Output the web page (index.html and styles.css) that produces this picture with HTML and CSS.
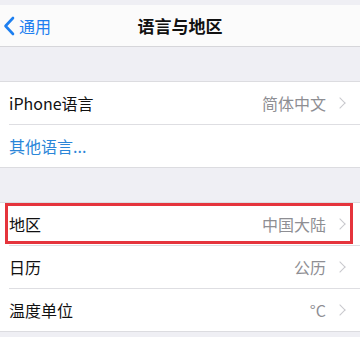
FILE: index.html
```html
<!DOCTYPE html>
<html lang="zh">

<head>
    <meta charset="UTF-8">
    <title>语言与地区</title>
    <link rel="stylesheet" href="styles.css">
</head>

<body>

    <header class="navbar">
        <a class="back">
            <svg width="12" height="20" viewBox="0 0 12 20">
                <path d="M10 2 L2.5 10 L10 18" fill="none" stroke="#1d7ff0" stroke-width="2.6" stroke-linecap="round" stroke-linejoin="round"/>
            </svg>
            <span>通用</span>
        </a>
        <h1>语言与地区</h1>
    </header>

    <section class="group first">
        <div class="row">
            <span class="label">iPhone语言</span>
            <span class="value">简体中文</span>
            <span class="chev"></span>
        </div>
        <div class="row">
            <span class="label link">其他语言...</span>
        </div>
    </section>

    <section class="group second">
        <div class="row highlight">
            <span class="label">地区</span>
            <span class="value">中国大陆</span>
            <span class="chev"></span>
        </div>
        <div class="row">
            <span class="label">日历</span>
            <span class="value">公历</span>
            <span class="chev"></span>
        </div>
        <div class="row">
            <span class="label">温度单位</span>
            <span class="value">°C</span>
            <span class="chev"></span>
        </div>
    </section>

</body></html>
```

FILE: styles.css
```css
body {
    margin: 0;
    background-color: #efeff4;
    font-family: "Noto Sans CJK SC", "Noto Sans", sans-serif;
    color: #111;
    padding-top: 5px;
    height: 332px;
    overflow: hidden;
}

.navbar {
    position: relative;
    height: 41px;
    background-color: #fbfbfb;
    border-bottom: 1px solid #d6d6da;
    display: flex;
    align-items: center;
    justify-content: center;
}

.navbar h1 {
    margin: 0;
    font-size: 17px;
    font-weight: 600;
}

.back {
    position: absolute;
    left: 3px;
    top: 0;
    height: 41px;
    display: flex;
    align-items: center;
    gap: 4px;
    color: #1d7ff0;
    font-size: 16px;
}

.group {
    background-color: white;
    border-top: 1px solid #dcdce0;
    border-bottom: 1px solid #dcdce0;
}

.group.first {
    margin-top: 34px;
}

.group.second {
    margin-top: 34px;
}

.row {
    position: relative;
    height: 42px;
    display: flex;
    align-items: center;
    padding-left: 9px;
    padding-right: 13px;
    font-size: 16px;
}

.row + .row::before {
    content: "";
    position: absolute;
    left: 9px;
    right: 0;
    top: 0;
    border-top: 1px solid #dedee2;
}

.row + .row {
    height: 43px;
}

.label {
    flex: 1;
}

.link {
    color: #2a86d8;
}

.value {
    color: #8e8e93;
    margin-right: 10px;
}

.chev {
    width: 7px;
    height: 7px;
    border-top: 1.3px solid #c8c8cd;
    border-right: 1.3px solid #c8c8cd;
    transform: rotate(45deg);
    margin-right: 3px;
}

.highlight::after {
    content: "";
    position: absolute;
    left: 5px;
    right: 7px;
    top: 0;
    bottom: 1px;
    border: 3px solid #e5343c;
}
```
